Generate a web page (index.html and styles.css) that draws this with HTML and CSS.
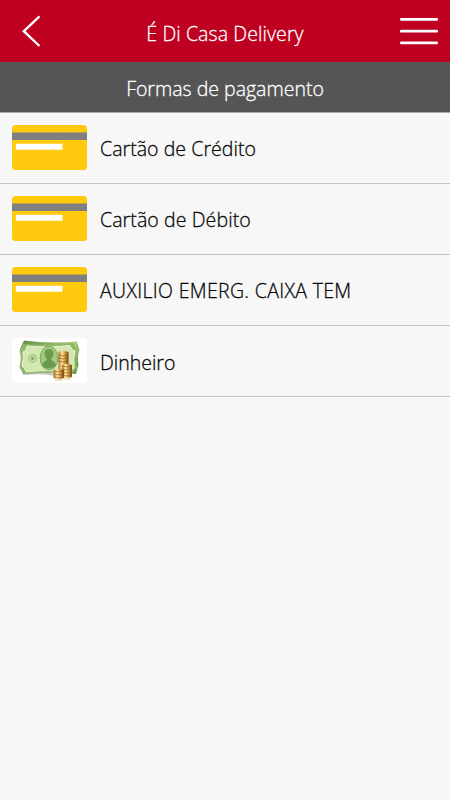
FILE: index.html
```html
<!DOCTYPE html>
<html lang="pt-BR">
<head>
<meta charset="utf-8">
<title>É Di Casa Delivery</title>
<link rel="stylesheet" href="styles.css">
</head>
<body>
<svg class="defs" aria-hidden="true">
  <defs>
    <symbol id="card" viewBox="0 0 75 45">
      <rect width="75" height="45" rx="3.5" fill="#ffc90e"/>
      <path d="M0 7.5H75V15H0z" fill="#7f7f7f"/>
      <path d="M3.8 18.7H50.5V24.8H3.8z" fill="#fff"/>
    </symbol>
    <linearGradient id="gold">
      <stop offset="0" stop-color="#a97424"/>
      <stop offset=".35" stop-color="#ffeaa0"/>
      <stop offset=".6" stop-color="#d9a647"/>
      <stop offset="1" stop-color="#794811"/>
    </linearGradient>
    <linearGradient id="edge" x2="1" y2="1">
      <stop offset="0" stop-color="#5d8c42"/>
      <stop offset=".5" stop-color="#a8cc7c"/>
      <stop offset="1" stop-color="#5d8c42"/>
    </linearGradient>
  </defs>
</svg>
<header class="topbar">
  <a class="back" href="#" aria-label="Voltar"><svg width="20" height="34" viewBox="0 0 20 34"><path d="M17.5 2.3 1.8 17.2 17.5 32"/></svg></a>
  <h1 class="title">É Di Casa Delivery</h1>
  <button class="menu" aria-label="Menu"><svg width="38" height="28" viewBox="0 0 38 28"><path d="M1.3 2.3H36.7M1.3 14.2H36.7M1.3 25.9H36.7"/></svg></button>
</header>
<h2 class="section">Formas de pagamento</h2>
<ul class="payments">
  <li class="payment"><svg class="thumb"><use href="#card"/></svg><span class="name credit">Cartão de Crédito</span></li>
  <li class="payment"><svg class="thumb"><use href="#card"/></svg><span class="name debit">Cartão de Débito</span></li>
  <li class="payment"><svg class="thumb"><use href="#card"/></svg><span class="name aid">AUXILIO EMERG. CAIXA TEM</span></li>
  <li class="payment">
    <svg class="thumb" viewBox="0 0 75 45">
      <rect width="75" height="45" rx="4" fill="#fff"/>
      <path d="M11 36Q32 34 43 37" stroke="#999" stroke-width="2" fill="none" opacity=".6"/>
      <path d="M12 2.5Q36 6 65 3.5L67.5 12Q65 18 66.5 27L64 36Q39 33 14 35L9 28Q12 18 8 11z" fill="url(#edge)"/>
      <path d="M11 6Q35 8 61 5L65 13Q62 20 65 30L60 35.5Q35 34 11 36L7.5 29Q10 19 7.5 13z" fill="#8fb76a"/>
      <path d="M15 8Q35 10 58 7.5Q59 12 63 13Q61 20 62 30Q59 31 58 33.5Q35 31.5 14 33.5Q13 30 10 28Q12 20 11 14Q15 13 15 8z" fill="#d3e8ae" stroke="#eaf5d4"/>
      <circle cx="20.5" cy="20.5" r="4" fill="#c2dca0" stroke="#a0c47c"/>
      <circle cx="20.5" cy="20.5" r="1.7" fill="#8cb56b"/>
      <ellipse cx="37" cy="20" rx="8.8" ry="12" fill="#a4ca80" stroke="#7ba85a" stroke-width="1"/>
      <path d="M37 11C33 11 32 14 33 18L35 22Q30 24 30 28Q36 33 44 28Q44 24 39 22L41 18Q43 11 37 11z" fill="#6b9b50"/>
      <g fill="url(#gold)">
        <path d="M46.5 14Q51 12 56.5 14V38Q51 40 46.5 38z"/>
        <path d="M50 27Q54 25 60 27V39Q54 41 50 39z"/>
        <path d="M41.5 32Q47 30 52 32V40Q47 42 41.5 40z"/>
      </g>
      <path d="M46.5 17Q51 19 56.5 17M46.5 20Q51 22 56.5 20M46.5 23Q51 25 56.5 23M50 28Q54 30 60 28M50 31Q55 33 60 31M50 34Q55 36 60 34M50 37Q55 39 60 37M42 33Q47 35 52 33M42 36Q47 38 52 36M42 39Q47 41 52 39" stroke="#805018" stroke-width=".6" fill="none"/>
      <path d="M43 42H51M52 41H59" stroke="#ddb777" stroke-width="2" opacity=".4"/>
    </svg>
    <span class="name cash">Dinheiro</span>
  </li>
</ul>
</body>
</html>
```
FILE: styles.css
```css
* { box-sizing: border-box; }
body {
  margin: 0;
  min-height: 100vh;
  background: #f7f7f7;
  color: #080808;
  font-family: "Segoe UI", "Open Sans", "Noto Sans", sans-serif;
  font-size: 19.5px;
}
.defs { position: absolute; width: 0; height: 0; }
.topbar {
  display: grid;
  grid-template-columns: 62px 1fr 62px;
  align-items: center;
  height: 62px;
  background: #be0021;
  color: #fff;
}
.back { height: 34px; padding-left: 22px; }
.back svg, .menu svg { display: block; fill: none; stroke: #fff; stroke-width: 2.4; }
.menu svg { stroke-linecap: round; stroke-width: 2.7; }
.menu { padding: 0 0 0 12px; border: 0; background: none; }
.title, .section, .name { font-weight: 300; white-space: nowrap; -webkit-text-stroke: .3px currentColor; }
.title, .section { margin: 0; text-align: center; }
.title { padding-top: 5px; font-size: 19.5px; line-height: 26px; letter-spacing: .1px; }
.section {
  height: 50.5px;
  border-bottom: 1px solid #aaa;
  background: #555;
  color: #fff;
  font-size: 19.5px;
  line-height: 53px;
}
.payments { margin: 0; padding: 0; list-style: none; }
.payment {
  display: flex;
  align-items: center;
  gap: 12.6px;
  height: 71.2px;
  padding: 0 12px 0 12.4px;
  border-bottom: 1px solid #c5c5c5;
}
.thumb { flex: none; width: 75px; height: 45px; margin-top: -.4px; }
.name { padding-top: 2px; }
.credit { letter-spacing: .05px; }
.debit { letter-spacing: .1px; }
.aid { letter-spacing: .33px; }
```
